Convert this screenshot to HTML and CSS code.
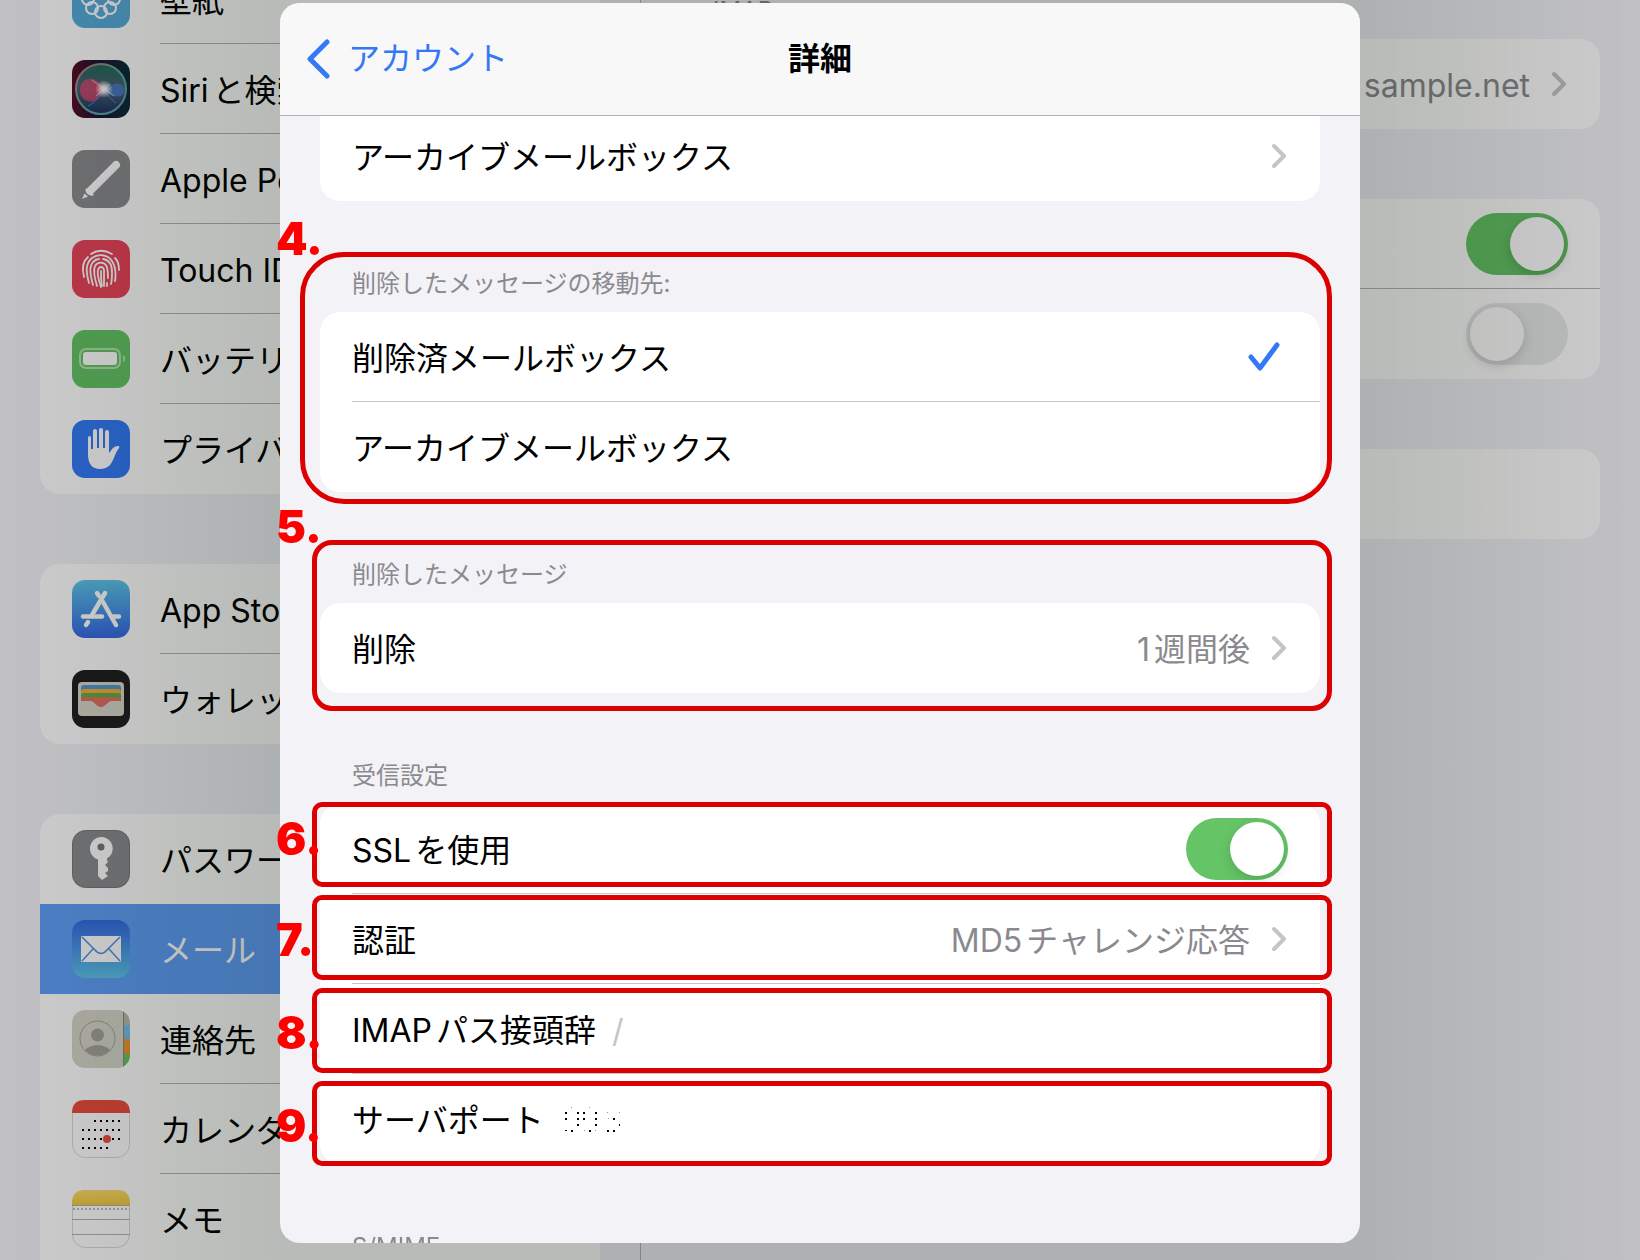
FILE: index.html
```html
<!DOCTYPE html>
<html lang="ja">
<head>
    <meta charset="UTF-8">
    <meta name="viewport" content="width=device-width, initial-scale=1.0">
    <title>詳細</title>
    <link rel="stylesheet" href="styles.css">
</head>
<body>
    <div class="settings">
        <nav class="sidebar">
            <div class="card">
                <a class="row" href="#">
                    <svg class="app-icon" viewBox="0 0 58 58">
                        <rect width="58" height="58" rx="13" fill="#57abdb"/>
                        <g fill="none" stroke="#fff" stroke-width="2">
                            <circle cx="29" cy="42" r="6"/>
                            <circle cx="20" cy="38" r="6"/>
                            <circle cx="38" cy="38" r="6"/>
                            <circle cx="16" cy="29" r="6"/>
                            <circle cx="42" cy="29" r="6"/>
                            <circle cx="20" cy="20" r="6"/>
                            <circle cx="38" cy="20" r="6"/>
                            <circle cx="29" cy="16" r="6"/>
                        </g>
                    </svg>
                    <span class="row-body"><span class="row-text">壁紙</span></span>
                </a>
                <a class="row" href="#">
                    <svg class="app-icon" viewBox="0 0 58 58">
                        <defs>
                            <linearGradient id="siri-bg" x1="0" y1="0" x2="1" y2="0">
                                <stop offset="0" stop-color="#5a0c28"/>
                                <stop offset="0.45" stop-color="#1c1430"/>
                                <stop offset="1" stop-color="#0c2c38"/>
                            </linearGradient>
                            <linearGradient id="siri-orb" x1="0" y1="0" x2="0" y2="1">
                                <stop offset="0" stop-color="#1f6a58"/>
                                <stop offset="0.5" stop-color="#4a6078"/>
                                <stop offset="1" stop-color="#1c3060"/>
                            </linearGradient>
                            <linearGradient id="siri-ring" x1="0" y1="0" x2="1" y2="1">
                                <stop offset="0" stop-color="#d06a80"/>
                                <stop offset="0.5" stop-color="#58b09a"/>
                                <stop offset="1" stop-color="#5a9ac8"/>
                            </linearGradient>
                            <radialGradient id="siri-glow">
                                <stop offset="0" stop-color="#fff"/>
                                <stop offset="0.3" stop-color="#fff" stop-opacity="0.85"/>
                                <stop offset="1" stop-color="#fff" stop-opacity="0"/>
                            </radialGradient>
                        </defs>
                        <rect width="58" height="58" rx="13" fill="url(#siri-bg)"/>
                        <circle cx="29" cy="29" r="25" fill="url(#siri-orb)" stroke="url(#siri-ring)" stroke-width="2"/>
                        <path d="M8 30C8 20 18 16 25 21C30 24 33 28 38 28C42 23 52 22 52 30C52 38 43 38 38 32C33 29 29 38 22 41C14 43 8 38 8 30Z" fill="#d8466e" opacity="0.8"/>
                        <path d="M34 31C38 22 52 22 52 30C52 38 41 39 34 31Z" fill="#3c7cc8" opacity="0.9"/>
                        <path d="M16 46C24 42 28 36 31 29C36 36 40 40 44 43" fill="none" stroke="#4a88d8" stroke-width="1"/>
                        <circle cx="32" cy="29" r="9" fill="url(#siri-glow)"/>
                        <path d="M20 20L42 36M24 36L38 24" stroke="#fff" stroke-width="1" opacity="0.6"/>
                    </svg>
                    <span class="row-body"><span class="row-text">Siriと検索</span></span>
                </a>
                <a class="row" href="#">
                    <svg class="app-icon" viewBox="0 0 58 58">
                        <rect width="58" height="58" rx="13" fill="#8b8b8f"/>
                        <path d="M18 41L44 15" stroke="#fff" stroke-width="8" stroke-linecap="round"/>
                        <path d="M13 40L15 38L22 45L19 46Z" fill="#fff"/>
                        <path d="M10 49L12.500 43.500L16 46.500Z" fill="#fff"/>
                    </svg>
                    <span class="row-body"><span class="row-text">Apple Pencil</span></span>
                </a>
                <a class="row" href="#">
                    <svg class="app-icon" viewBox="0 0 58 58">
                        <rect width="58" height="58" rx="13" fill="#ea445a"/>
                        <g fill="none" stroke="#fff" stroke-width="1.800" stroke-linecap="round">
                            <path d="M19 14C25 10 33 10 40 14"/>
                            <path d="M12 37C10 29 11 21 16 17"/>
                            <path d="M43 18C46 21 47 25 47 30"/>
                            <path d="M17 43C14 32 13 24 20 18C27 13 36 15 40 21C44 27 44 34 43 41"/>
                            <path d="M21 45C18 34 17 27 21 22C23 20 25 19 27 19"/>
                            <path d="M31 19C38 20 40 26 40 32C40 37 40 41 39 44"/>
                            <path d="M25 46C22 36 21 30 23 26C26 21 33 22 35 27C36 31 36 34 36 38"/>
                            <path d="M29 47C26 38 25 33 26 30C27 26 31 26 32 30C32 36 32 40 32 46"/>
                            <path d="M29 31C29 36 29 42 30 46"/>
                            <path d="M35 43V46"/>
                        </g>
                    </svg>
                    <span class="row-body"><span class="row-text">Touch IDとパスコード</span></span>
                </a>
                <a class="row" href="#">
                    <svg class="app-icon" viewBox="0 0 58 58">
                        <rect width="58" height="58" rx="13" fill="#65c466"/>
                        <rect x="8" y="19" width="40" height="19" rx="6" fill="none" stroke="#fff" stroke-width="2" opacity="0.500"/>
                        <rect x="11" y="22" width="34" height="13" rx="3" fill="#fff"/>
                        <path d="M51 25C54 26 54 31 51 32Z" fill="#fff" opacity="0.500"/>
                    </svg>
                    <span class="row-body"><span class="row-text">バッテリー</span></span>
                </a>
                <a class="row" href="#">
                    <svg class="app-icon" viewBox="0 0 58 58">
                        <rect width="58" height="58" rx="13" fill="#347af6"/>
                        <path d="M16 18Q16 16 17.500 16Q19 16 19 18V29H21V11Q21 9 23 9Q25 9 25 11V28H27V10Q27 8 29 8Q31 8 31 10V28H33V12Q33 10 35 10Q37 10 37 12V33L41 28Q43 26 46 26Q48 26 47 28C43 33 42 40 38 45Q34 49 28 49Q16 49 16 34Z" fill="#fff"/>
                    </svg>
                    <span class="row-body"><span class="row-text">プライバシー</span></span>
                </a>
            </div>

            <div class="card">
                <a class="row" href="#">
                    <svg class="app-icon" viewBox="0 0 58 58">
                        <defs>
                            <linearGradient id="store-bg" x1="0" y1="0" x2="0" y2="1">
                                <stop offset="0" stop-color="#5ec5ea"/>
                                <stop offset="1" stop-color="#3568e4"/>
                            </linearGradient>
                        </defs>
                        <rect width="58" height="58" rx="13" fill="url(#store-bg)"/>
                        <g stroke="#fff" stroke-width="4.500" stroke-linecap="round">
                            <path d="M33 13L20 35"/>
                            <path d="M25 13L27 16"/>
                            <path d="M31 22L44 45"/>
                            <path d="M11 36.500H30"/>
                            <path d="M41 36.500H47"/>
                            <path d="M16 42L14 45"/>
                        </g>
                    </svg>
                    <span class="row-body"><span class="row-text">App Store</span></span>
                </a>
                <a class="row" href="#">
                    <svg class="app-icon" viewBox="0 0 58 58">
                        <rect width="58" height="58" rx="13" fill="#1f1f1f"/>
                        <rect x="6" y="12" width="46" height="34" rx="4" fill="#d8d6ca"/>
                        <path d="M9 22V18Q9 15 12 15H46Q49 15 49 18V22Z" fill="#5497cb"/>
                        <path d="M9 26V22Q9 19 12 19H46Q49 19 49 22V26Z" fill="#f2ae3d"/>
                        <path d="M9 30V26Q9 23 12 23H46Q49 23 49 26V30Z" fill="#5faf46"/>
                        <path d="M9 31V30Q9 27 12 27H46Q49 27 49 30V31H40C35 31 34 37 29 37C24 37 23 31 18 31Z" fill="#e0705f"/>
                    </svg>
                    <span class="row-body"><span class="row-text">ウォレット</span></span>
                </a>
            </div>

            <div class="card continues-below">
                <a class="row" href="#">
                    <svg class="app-icon" viewBox="0 0 58 58">
                        <rect x="0.500" y="0.500" width="57" height="57" rx="13" fill="#8b8b8f" stroke="#77777b"/>
                        <path d="M29 7A11.500 11.500 0 0 1 35 28.500V30L36 32L33 35L36 38V41L33 43L36 46L30 50L26 46V29.500A11.500 11.500 0 0 1 29 7Z" fill="#fff"/>
                        <circle cx="29" cy="17" r="3.500" fill="#77777b"/>
                    </svg>
                    <span class="row-body"><span class="row-text">パスワード</span></span>
                </a>
                <a class="row selected" href="#">
                    <svg class="app-icon" viewBox="0 0 58 58">
                        <defs>
                            <linearGradient id="mail-bg" x1="0" y1="0" x2="0" y2="1">
                                <stop offset="0" stop-color="#3568e4"/>
                                <stop offset="1" stop-color="#5ec5ea"/>
                            </linearGradient>
                        </defs>
                        <rect width="58" height="58" rx="13" fill="url(#mail-bg)"/>
                        <rect x="9" y="16" width="40" height="26" rx="1" fill="#fff"/>
                        <path d="M10 17L23 30Q29 37 35 30L48 17M10 41L21 29M48 41L37 29" fill="none" stroke="#4d94e8" stroke-width="1.500"/>
                    </svg>
                    <span class="row-body"><span class="row-text">メール</span></span>
                </a>
                <a class="row" href="#">
                    <svg class="app-icon" viewBox="0 0 58 58">
                        <defs>
                            <clipPath id="contacts-clip"><rect width="58" height="58" rx="13"/></clipPath>
                            <clipPath id="contacts-face"><circle cx="25.500" cy="28.500" r="17"/></clipPath>
                        </defs>
                        <g clip-path="url(#contacts-clip)">
                            <rect width="58" height="58" fill="#d6d5ca"/>
                            <rect x="51" width="7" height="15" fill="#bab8b0"/>
                            <rect x="51" y="15" width="7" height="14" fill="#74bfea"/>
                            <rect x="51" y="29" width="7" height="15" fill="#ee9434"/>
                            <rect x="51" y="44" width="7" height="14" fill="#65c466"/>
                            <path d="M51.500 0V58" stroke="#8c8b84"/>
                        </g>
                        <circle cx="25.500" cy="28.500" r="17.500" fill="none" stroke="#a3a199"/>
                        <circle cx="25.500" cy="25" r="6.500" fill="#a3a199"/>
                        <ellipse cx="25.500" cy="44" rx="14" ry="9" fill="#a3a199" clip-path="url(#contacts-face)"/>
                    </svg>
                    <span class="row-body"><span class="row-text">連絡先</span></span>
                </a>
                <a class="row" href="#">
                    <svg class="app-icon" viewBox="0 0 58 58">
                        <rect x="0.500" y="0.500" width="57" height="57" rx="13" fill="#fff" stroke="#d8d8d8"/>
                        <path d="M0 13Q0 0 13 0H45Q58 0 58 13Z" fill="#eb4c3d"/>
                        <g stroke="#000" stroke-width="2" stroke-dasharray="2 4">
                            <path d="M22 21H48"/>
                            <path d="M10 30H48"/>
                            <path d="M10 39H48"/>
                            <path d="M10 48H36"/>
                        </g>
                        <circle cx="35" cy="39" r="4" fill="#eb4c3d"/>
                    </svg>
                    <span class="row-body"><span class="row-text">カレンダー</span></span>
                </a>
                <a class="row" href="#">
                    <svg class="app-icon" viewBox="0 0 58 58">
                        <defs>
                            <linearGradient id="memo-bg" x1="0" y1="0" x2="0" y2="1">
                                <stop offset="0" stop-color="#fbdc6c"/>
                                <stop offset="1" stop-color="#f2c83c"/>
                            </linearGradient>
                        </defs>
                        <rect x="0.500" y="0.500" width="57" height="57" rx="13" fill="#fff" stroke="#d8d8d8"/>
                        <path d="M0 15V13Q0 0 13 0H45Q58 0 58 13V15Z" fill="url(#memo-bg)"/>
                        <path d="M0 15.500H58M0 29.500H58M0 44.500H58" stroke="#b0b0b0"/>
                        <path d="M1 19H58" stroke="#bcbcbc" stroke-width="2" stroke-dasharray="2 2"/>
                    </svg>
                    <span class="row-body"><span class="row-text">メモ</span></span>
                </a>
            </div>
        </nav>

        <main class="detail">
            <section class="group">
                <h2 class="group-title">IMAP</h2>
                <div class="card">
                    <button class="row" type="button">
                        <span class="row-body">
                            <span class="row-value">sample.net</span>
                            <svg class="chevron" viewBox="0 0 16 26"><path d="M2 3L12 13L2 23"/></svg>
                        </span>
                    </button>
                </div>
            </section>
            <div class="card">
                <div class="row">
                    <span class="row-body"><input class="switch" type="checkbox" aria-label="メール" checked></span>
                </div>
                <div class="row">
                    <span class="row-body"><input class="switch" type="checkbox" aria-label="メモ"></span>
                </div>
            </div>
            <div class="card">
                <button class="row" type="button" aria-label="詳細"><span class="row-body"></span></button>
            </div>
        </main>
    </div>

    <div class="overlay">
        <div class="sheet">
            <div class="sheet-inner">
                <header class="sheet-header">
                    <button class="back" type="button">
                        <svg class="back-arrow" viewBox="0 0 26 40"><path d="M21 3L4 20L21 37"/></svg>
                        アカウント
                    </button>
                    <h1>詳細</h1>
                </header>

                <div class="sheet-body">
                    <div class="card continues-above">
                        <button class="row" type="button">
                            <span class="row-body">
                                <span class="row-text">アーカイブメールボックス</span>
                                <svg class="chevron" viewBox="0 0 16 26"><path d="M2 3L12 13L2 23"/></svg>
                            </span>
                        </button>
                    </div>

                    <section class="group">
                        <h2 class="group-title">削除したメッセージの移動先:</h2>
                        <div class="card">
                            <label class="row">
                                <input class="choice" type="radio" name="trash" checked>
                                <span class="row-body">
                                    <span class="row-text">削除済メールボックス</span>
                                    <svg class="check" viewBox="0 0 32 30"><path d="M3 15L12 26L29 3"/></svg>
                                </span>
                            </label>
                            <label class="row">
                                <input class="choice" type="radio" name="trash">
                                <span class="row-body">
                                    <span class="row-text">アーカイブメールボックス</span>
                                    <svg class="check" viewBox="0 0 32 30"><path d="M3 15L12 26L29 3"/></svg>
                                </span>
                            </label>
                        </div>
                    </section>

                    <section class="group">
                        <h2 class="group-title">削除したメッセージ</h2>
                        <div class="card">
                            <button class="row" type="button">
                                <span class="row-body">
                                    <span class="row-text">削除</span>
                                    <span class="row-value">1週間後</span>
                                    <svg class="chevron" viewBox="0 0 16 26"><path d="M2 3L12 13L2 23"/></svg>
                                </span>
                            </button>
                        </div>
                    </section>

                    <section class="group">
                        <h2 class="group-title">受信設定</h2>
                        <div class="card">
                            <div class="row">
                                <span class="row-body">
                                    <label class="row-text" for="ssl">SSLを使用</label>
                                    <input class="switch" id="ssl" type="checkbox" checked>
                                </span>
                            </div>
                            <button class="row" type="button">
                                <span class="row-body">
                                    <span class="row-text">認証</span>
                                    <span class="row-value">MD5チャレンジ応答</span>
                                    <svg class="chevron" viewBox="0 0 16 26"><path d="M2 3L12 13L2 23"/></svg>
                                </span>
                            </button>
                            <div class="row">
                                <span class="row-body">
                                    <label class="row-text" for="prefix">IMAPパス接頭辞</label>
                                    <input class="field" id="prefix" type="text" placeholder="/">
                                </span>
                            </div>
                            <div class="row">
                                <span class="row-body">
                                    <span class="row-text">サーバポート</span>
                                    <!-- masked port number -->
                                    <svg class="port" viewBox="0 0 56 26">
                                        <g fill="#000">
                                            <path d="M0 6h2v2h-2zM12 6h2v2h-2zM18 6h2v2h-2zM30 6h2v2h-2z"/>
                                            <path d="M0 12h2v2h-2zM12 12h2v2h-2zM18 12h2v2h-2zM30 12h2v2h-2zM48 12h2v2h-2z"/>
                                            <path d="M12 18h2v2h-2zM30 18h2v2h-2zM54 18h1v2h-1z"/>
                                            <path d="M0 24h2v1h-2zM6 24h2v2h-2zM24 24h2v2h-2zM42 24h2v2h-2zM48 24h2v2h-2z"/>
                                        </g>
                                        <path d="M6 1h1v1h-1zM24 1h1v1h-1zM42 6h1v1h-1zM54 6h1v1h-1zM43 12h1v1h-1zM19 24h1v1h-1zM30 24h1v1h-1z" fill="#999"/>
                                    </svg>
                                </span>
                            </div>
                        </div>
                    </section>

                    <section class="group">
                        <h2 class="group-title">S/MIME</h2>
                    </section>
                </div>
            </div>

            <!-- numbered callouts -->
            <div class="mark mark-4"><span>4.</span></div>
            <div class="mark mark-5"><span>5.</span></div>
            <div class="mark mark-6"><span>6.</span></div>
            <div class="mark mark-7"><span>7.</span></div>
            <div class="mark mark-8"><span>8.</span></div>
            <div class="mark mark-9"><span>9.</span></div>
        </div>
    </div>
</body>
</html>
```
FILE: styles.css
```css
* {
    box-sizing: border-box;
}

body {
    margin: 0;
    height: 100vh;
    overflow: hidden;
    background: #f2f2f7;
    color: #000;
    font-family: Inter, "Noto Sans CJK JP", sans-serif;
    font-size: 32px;
    line-height: 40px;
    text-autospace: normal;
}

button,
input {
    font: inherit;
    color: inherit;
}

/* Settings screen behind the sheet */
.settings {
    display: flex;
    height: 100vh;
    overflow: hidden;
}

.sidebar {
    flex: 0 0 640px;
    min-width: 0;
    display: flex;
    flex-direction: column;
    gap: 70px;
    margin-top: -46px;
    padding: 0 40px;
}

.detail {
    flex: 1;
    display: flex;
    flex-direction: column;
    gap: 70px;
    padding: 0 40px;
    border-left: 1px solid #b4b4b8;
}

.detail .group {
    margin-top: -72px;
}

/* Cards and rows */
.card {
    flex-shrink: 0;
    background: #fff;
    border-radius: 20px;
    overflow: hidden;
}

.continues-above {
    border-top-left-radius: 0;
    border-top-right-radius: 0;
}

.continues-below {
    border-bottom-left-radius: 0;
    border-bottom-right-radius: 0;
}

.row {
    display: flex;
    align-items: center;
    gap: 30px;
    width: 100%;
    height: 90px;
    margin: 0;
    padding: 0 0 0 32px;
    border: 0;
    background: none;
    color: inherit;
    text-align: left;
    text-decoration: none;
    white-space: nowrap;
}

.row-body {
    flex: 1;
    display: flex;
    align-items: center;
    height: 90px;
    padding-right: 32px;
    border-bottom: 1px solid #c6c6c8;
}

.sidebar .row-body,
.detail .row-body {
    border-color: #b4b4b8;
}

.row:last-child .row-body,
.row:has(+ .selected) .row-body,
.selected .row-body {
    border-color: transparent;
}

.selected {
    background: #5f9ff8;
    color: #fff;
}

.app-icon {
    flex: none;
    width: 58px;
    height: 58px;
}

.row-text,
.row-value {
    padding-top: 4px;
}

.row-value {
    margin-left: auto;
    color: #8a8a8e;
}

.chevron {
    flex: none;
    width: 16px;
    height: 26px;
    margin-left: auto;
    fill: none;
    stroke: #c5c5c7;
    stroke-width: 4;
    stroke-linecap: round;
    stroke-linejoin: round;
}

.row-value + .chevron {
    margin-left: 22px;
}

.check {
    visibility: hidden;
    width: 32px;
    height: 30px;
    margin: 0 8px 0 auto;
    fill: none;
    stroke: #3478f6;
    stroke-width: 5;
    stroke-linecap: round;
    stroke-linejoin: round;
}

.choice {
    position: absolute;
    opacity: 0;
}

.choice:checked + .row-body .check {
    visibility: visible;
}

.switch {
    appearance: none;
    display: flex;
    width: 102px;
    height: 62px;
    margin: 0 0 0 auto;
    padding: 4px;
    border-radius: 31px;
    background: #e9e9eb;
}

.switch::before {
    content: "";
    width: 54px;
    height: 54px;
    border-radius: 50%;
    background: #fff;
    box-shadow: 0 4px 12px rgba(0, 0, 0, 0.15);
}

.switch:checked {
    justify-content: flex-end;
    background: #65c466;
}

.field {
    flex: 1;
    min-width: 0;
    margin-left: 16px;
    padding: 4px 0 0;
    border: 0;
    outline: 0;
    background: none;
}

.field::placeholder {
    color: #c5c5c7;
    opacity: 1;
}

.port {
    width: 56px;
    height: 26px;
    margin-left: 21px;
}

.group-title {
    margin: 0;
    padding: 67px 32px 12px;
    color: #8a8a8e;
    font-size: 24px;
    font-weight: 400;
    line-height: 32px;
}

/* Sheet */
.overlay {
    position: fixed;
    inset: 0;
    display: flex;
    justify-content: center;
    padding: 3px 20px 17px;
    background:
        linear-gradient(90deg, rgba(20, 45, 15, 0), rgba(20, 45, 15, 0.11) 280px, rgba(20, 45, 15, 0.11) calc(100% - 280px), rgba(20, 45, 15, 0)),
        rgba(0, 0, 0, 0.2);
}

.sheet {
    position: relative;
    width: 100%;
    max-width: 1080px;
}

.sheet-inner {
    height: 100%;
    overflow: hidden;
    border-radius: 20px;
    background: #f2f2f7;
}

.sheet-header {
    position: relative;
    z-index: 1;
    display: grid;
    grid-template-columns: 1fr auto 1fr;
    align-items: center;
    height: 113px;
    padding: 0 26px;
    border-bottom: 1px solid #b2b2b6;
    background: #f8f8f8;
}

.sheet-header h1 {
    margin: 0;
    font-size: 32px;
    font-weight: 700;
}

.back {
    display: flex;
    align-items: center;
    gap: 16px;
    padding: 0;
    border: 0;
    background: none;
    color: #3478f6;
}

.back-arrow {
    width: 26px;
    height: 40px;
    fill: none;
    stroke: #3478f6;
    stroke-width: 5;
    stroke-linecap: round;
    stroke-linejoin: round;
}

.sheet-body {
    margin-top: -5px;
    padding: 0 40px;
}

/* Callouts */
.mark {
    position: absolute;
    left: 32px;
    right: 28px;
    height: 85px;
    border: 5px solid #dc0000;
    border-radius: 10px;
    pointer-events: none;
}

.mark span {
    position: absolute;
    top: 20px;
    left: -41px;
    color: #f00;
    font-family: Inter, sans-serif;
    font-size: 45px;
    font-weight: 900;
    line-height: 40px;
}

.mark-4 {
    top: 249px;
    left: 20px;
    height: 252px;
    border-radius: 44px;
}

.mark-4 span {
    top: -38px;
    left: -29px;
}

.mark-5 {
    top: 537px;
    height: 171px;
    border-radius: 20px;
}

.mark-5 span {
    top: -38px;
}

.mark-6 {
    top: 799px;
}

.mark-6 span {
    top: 12px;
}

.mark-7 {
    top: 892px;
}

.mark-8 {
    top: 985px;
}

.mark-9 {
    top: 1078px;
}
```
